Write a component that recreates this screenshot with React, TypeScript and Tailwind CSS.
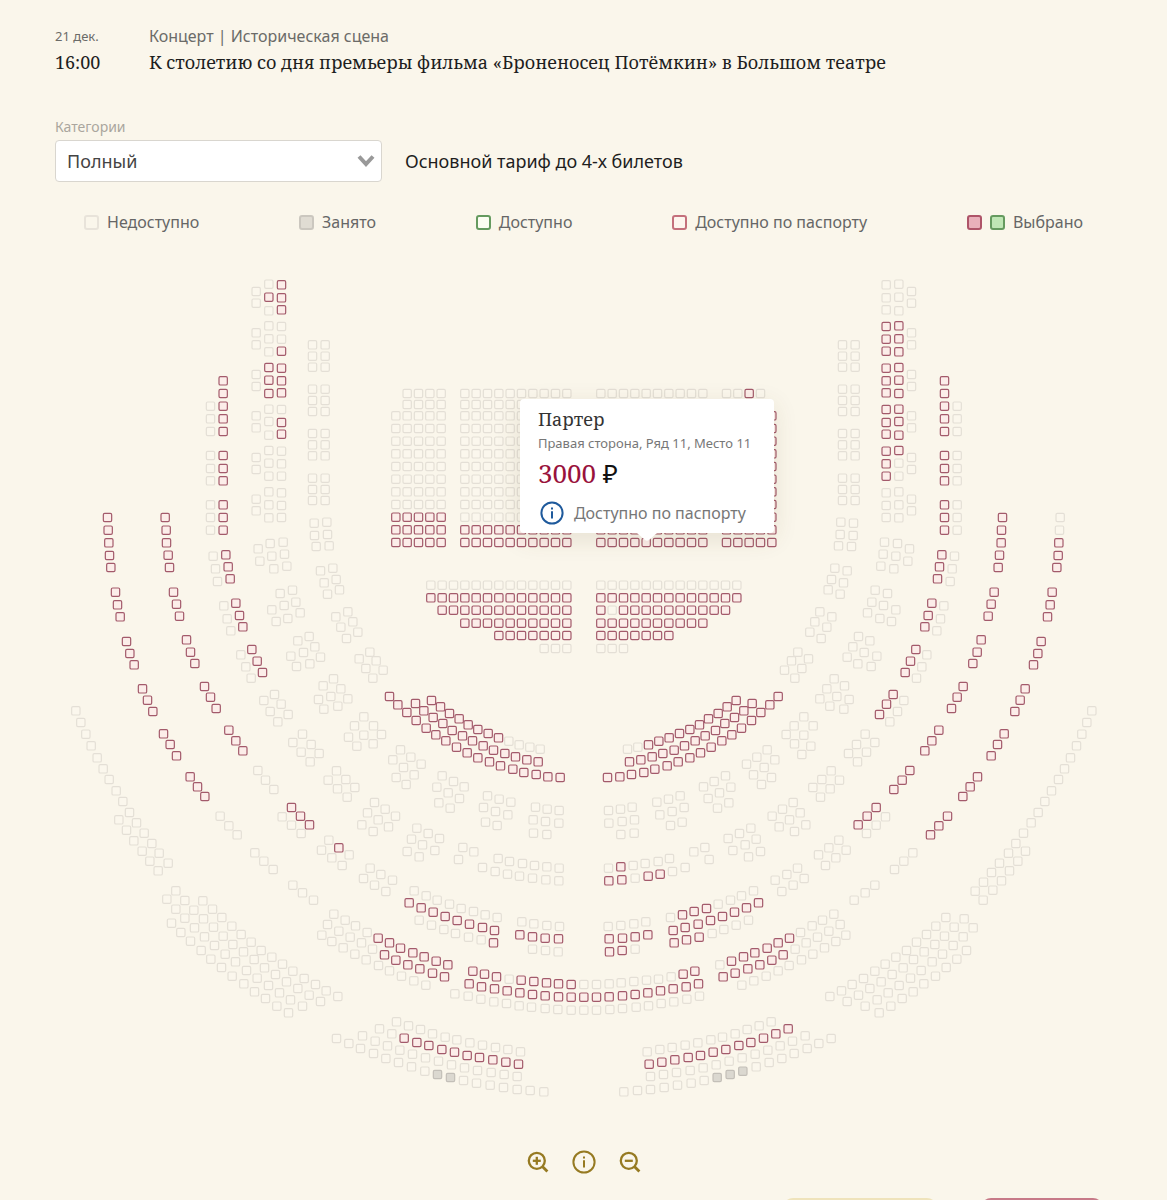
import React from "react";

type Sector = {
  x: number;
  y: number;
  /** [seat centres "x,y;x,y", left half states, right half states] */
  rows: [string, string, string][];
};

// One map unit is a third of a pixel. The hall is symmetric about AXIS / 2.
// r = by passport, g = taken, - = unavailable, space = no seat.
// A single-character state applies to the whole row.
const AXIS = 3502;

const SECTORS: Sector[] = [
  {
    x: 570,
    y: 810,
    rows: [
      ["274,44;274,83;274,119;236,42;236,81;236,122;198,64;198,99", "rrr-r---", "-"],
      ["274,169;274,207;274,243;236,167;236,206;236,245;198,188;198,224", "--r-----", "rrrrrr--"],
      ["274,294;274,332;274,368;236,292;236,330;236,370;198,313;198,349", "rrrrrr--", "rrrrrr--"],
      ["274,418;274,457;274,492;236,417;236,454;236,495;198,437;198,473", "-rr-----", "rrrrrr--"],
      ["274,543;274,581;274,618;236,541;236,579;236,618;198,562;198,598", "-", "rrrr----"],
      ["274,668;274,706;274,742;236,665;236,704;236,743;198,687;198,722", "-", "-"],
      ["279,816;283,852;290,888;240,820;245,858;251,896;204,836;209,873", "-", "-"],
      ["307,960;317,996;330,1028;270,970;282,1006;293,1045;245,1019;258,1054", "-", "-"],
      ["357,1099;374,1130;391,1161;323,1112;340,1147;359,1181;302,1158;319,1189", "-", "-"],
      ["367,224;367,258;367,291;405,224;405,258;405,291", "-", "-"],
      ["367,357;367,391;367,424;405,357;405,391;405,424", "-", "-"],
      ["367,490;367,524;367,557;405,490;405,524;405,557", "-", "-"],
      ["367,624;367,658;367,691;405,624;405,658;405,691", "-", "-"],
      ["372,759;373,796;378,829;410,756;412,793;417,827", "-", "-"],
      ["391,902;402,938;412,972;428,894;438,928;448,959", "-", "-"],
      ["437,1040;452,1071;469,1105;473,1025;488,1055;503,1086", "-", "-"],
      ["507,1166;527,1195;548,1224;539,1146;558,1172;579,1200", "-", "-"],
      ["99,332;99,370;99,408;99,446;99,484", "r", "r"],
      ["99,556;99,595;99,632;99,704;99,742;99,780", "r", "r"],
      ["61,408;61,446;61,484;61,556;61,595;61,632;61,704;61,742;61,780", "-", "-"],
      ["107,854;114,890;120,926;137,999;148,1036;158,1070;185,1138;201,1173;217,1207", "r", "r"],
      ["69,858;76,896;82,934;101,1007;111,1046;122,1082;152,1154;167,1190;183,1224", "-", "-"],
    ],
  },
  {
    x: 180,
    y: 1470,
    rows: [
      ["643,613;663,642;684,673;611,631;630,664;653,695", "-", "rrr---"],
      ["727,732;753,763;777,790;698,757;723,786;750,815", "-", "-"],
      ["829,842;857,868;884,892;804,870;832,896;861,921", "-", "-"],
      ["943,937;975,957;1006,978;922,968;954,989;985,1010;905,1004;939,1024", "-", "-"],
      ["820,566;842,596;863,626;789,587;812,619;833,648;775,628;791,657", "-", "-"],
      ["911,680;940,707;964,733;883,707;911,735;939,761;865,741;890,768;917,793", "-------- ", "------ --"],
      ["694,952;721,978;748,1004;666,980;694,1005;723,1030", "rrr---", "rrr---"],
      ["806,1050;836,1073;867,1094;784,1080;815,1103;846,1126", "-r----", "-"],
      ["142,82;144,120;146,158;148,196;152,232", "r", "--rrr"],
      ["166,306;172,344;180,380;199,454;209,490;222,524;247,596;262,630;278,664", "r", "r"],
      ["310,731;330,763;349,797;390,860;412,890;434,919", "r", "r"],
      ["480,978;506,1007;531,1034", "-", "r"],
      ["584,1088;611,1113;639,1138;698,1185;727,1208;760,1230", "-", "-"],
      ["315,82;318,120;319,158;324,195;328,232;340,306;349,342;358,378", "r", "r"],
      ["379,449;391,486;404,520;433,589;451,621;468,655;506,720;527,752;548,782", "r", "r"],
      ["593,841;616,870;641,898", "-", "r"],
      ["47,662;62,697;77,732;93,767;111,803;129,836;147,868;168,902;188,934", "-", "-"],
      ["208,967;229,998;252,1029;275,1060;297,1089;324,1119", "-", "-"],
      ["176,989;199,1020;221,1052;246,1083;269,1113;294,1142", "-", "   ---"],
      ["348,1147;372,1176;397,1203;318,1172;344,1200;373,1230", " ", "-"],
    ],
  },
  {
    x: 1110,
    y: 2010,
    rows: [
      ["0,594;32,613;67,630;-20,625;13,645;47,664", "-", "-"],
      ["91,239;122,261;153,282;68,269;100,292;132,314;78,322;108,343", "-", "-"],
      ["216,317;250,334;282,350;200,351;234,368;268,385;206,398;240,414", "-", "-"],
      ["352,377;387,387;422,396;340,412;376,424;413,434;346,456;381,466", "-", "-"],
      ["496,411;531,417;567,421;489,449;526,454;566,459;490,489;530,493", "-", "-"],
      ["140,474;174,490;208,505;124,507;157,524;194,541;111,544;147,560", "-", "-"],
      ["278,532;311,545;265,568", "-", "-"],
      ["384,565;418,574;457,580;493,586;530,590;567,594", "-", "----r-"],
      ["337,592;375,604;412,612;448,618;487,624;527,629;566,632", "-", "--rr-rr"],
      ["184,91;211,110;238,130;267,146;294,164;323,178;354,190;385,203;416,213;447,224;479,231;510,237", "rrrrrrrr----", "rrrrrrrrrr--"],
      ["136,100;161,122;189,142;218,160;246,181;277,197;307,212;339,227;370,240;404,250;436,260;470,269;504,275", "r", "r"],
      ["58,79;83,104;110,127;138,151;168,174;197,194;227,212;259,231;291,248;323,263;358,275;391,287;428,297;461,307;498,313;533,320;570,322", "r", "r"],
      ["132,662;168,677;201,690;238,702;273,715;310,724;345,734;381,742", "-", "----rrr-"],
      ["117,698;153,713;189,726;225,739;261,751;298,762;337,772;373,781", "r", "r"],
      ["147,750;184,765;221,778;256,790;295,801;333,809;370,818", "------r", "----rrr"],
      ["455,755;491,761;530,766;568,769", "-", "-"],
      ["449,794;487,800;525,804;565,806", "r", "r"],
      ["487,837;526,841;564,845", "-", "-rr"],
    ],
  },
  {
    x: 960,
    y: 2640,
    rows: [
      ["41,102;75,120;106,137;141,157;174,174;208,188;241,204;278,218;312,230;348,243;383,254", "----rrrrrrr", "----rrrrrr-"],
      ["22,133;56,153;90,171;124,188;157,207;193,224;227,240;263,254;299,266;337,279;373,290", "-----rrrrrr", "-----rrrrrr"],
      ["5,165;35,184;69,203;104,222;138,239;175,256;208,272;244,288;281,302;317,315", "-", "-"],
      ["458,273;493,282;529,290;567,297;603,300;641,304;679,308;715,311;753,313;791,313", "rrr-rrrrr-", "rr------- "],
      ["447,311;484,320;523,326;561,332;599,338;637,343;675,347;715,350;753,351;791,351", "r", "rrrrrrrrr "],
      ["404,341;444,348;482,357;521,365;559,370;597,377;634,381;675,385;713,388;753,390;791,390", "-", " --------- "],
      ["229,425;265,437;301,448;337,461;375,471;410,479;449,488;487,495;526,502;563,508;601,515", "-", "-"],
      ["178,446;215,461;252,474;290,487;326,496;365,508;403,516;441,526;478,532;518,539;557,546;595,552", "--rrrrrrrrrr", "r"],
      ["127,467;165,483;202,497;239,510;277,522;316,533;355,543;394,554;433,563;472,571;513,577;552,583;591,589", "-", "-"],
      ["49,475;86,490;121,505;160,520;197,535;235,547;274,560;314,573;352,583;391,592;430,601;469,609;510,615;550,622;591,628;630,631;671,635", "--------gg-------", "-------ggg-------"],
    ],
  },
  {
    x: 450,
    y: 2580,
    rows: [
      ["77,92;104,121;131,150;160,176;190,201;219,228;248,253;280,275;312,298;343,323;376,343;409,365;443,385;477,405;511,424", "-", "   ------------"],
      ["158,122;187,147;215,172;245,198;273,223;303,246;333,271;365,291;397,312;428,333;462,355;496,373;528,392;563,409", "-", "  ------------"],
      ["50,117;77,147;104,174;133,203;163,230;193,256;225,282;256,305;289,331;321,354;355,376;388,398;421,419;457,438", "-", "   -----------"],
      ["64,189;92,217;121,243;153,271;182,297;214,322;246,348;281,371;313,395;346,415;380,438;415,458", "-", "   ---------"],
    ],
  },
];

type Seat = { x: number; y: number; state: string };

const seats: Seat[] = [];

SECTORS.forEach((sector) =>
  sector.rows.forEach(([points, left, right]) =>
    points.split(";").forEach((point, i) => {
      const [px, py] = point.split(",").map(Number);
      const x = sector.x + px;
      const y = sector.y + py;
      seats.push({ x, y, state: left.length > 1 ? left[i] : left });
      seats.push({ x: AXIS - x, y, state: right.length > 1 ? right[i] : right });
    })
  )
);

// Stalls: [y, first column of 13, left states, right states], columns run to the aisle.
const STALLS_STEP = 34;
const addStalls = (y: number, x: number, count: number, left: string, right: string) => {
  for (let i = 0; i < count; i++) {
    const cx = x + i * STALLS_STEP;
    seats.push({ x: cx, y, state: left.length > 1 ? left[i] : left });
    seats.push({ x: AXIS - cx, y, state: right.length > 1 ? right[i] : right });
  }
};

for (let row = 0; row < 13; row++) {
  const y = row < 2 ? 1180 + row * 33 : 1247 + (row - 2) * 38;
  const side = row > 9 ? "r" : "-";
  if (row === 0) addStalls(y, 1221, 4, "-", "-r--");
  else if (row === 1) addStalls(y, 1221, 4, "-", "-");
  else addStalls(y, 1187, 5, side, "r");
  addStalls(y, 1394, 10, row > 10 ? "r" : "-", row > 10 ? "r" : "-");
}
addStalls(1755, 1292, 13, "-", "-");
addStalls(1793, 1292, 13, "r", "r");
addStalls(1830, 1326, 12, "r", "rrrrrrrrrr-r");
addStalls(1869, 1394, 10, "r", "r");
addStalls(1906, 1496, 7, "r", "r");
addStalls(1945, 1632, 3, "-", "-");

const SEAT_CLASS: Record<string, string> = {
  r: "fill-[#fcede9] stroke-[#a35a6b]",
  g: "fill-[#dbd8d0] stroke-[#c3bfb8]",
  "-": "fill-[#fbf7ed] stroke-[#e4dfd6]",
};

function SeatMap() {
  return (
    <svg viewBox="165 810 3171 2520" className="block h-auto w-full" role="img" aria-label="Схема зала">
      {seats
        .filter((s) => s.state !== " ")
        .map((s, i) => (
          <rect
            key={i}
            x={s.x - 12}
            y={s.y - 12}
            width={25}
            height={25}
            rx={4}
            strokeWidth={3.6}
            className={SEAT_CLASS[s.state]}
          />
        ))}
    </svg>
  );
}

function InfoIcon({ className }: { className: string }) {
  return (
    <svg viewBox="0 0 24 24" fill="none" stroke="currentColor" strokeWidth="2" className={className} aria-hidden="true">
      <circle cx="12" cy="12" r="10.6" />
      <path d="M12 10.2v7.2" />
      <path d="M12 6.4v2" />
    </svg>
  );
}

function ZoomIcon({ plus }: { plus?: boolean }) {
  return (
    <svg viewBox="0 0 22 22" fill="none" stroke="currentColor" strokeWidth="2.3" className="size-[22px]" aria-hidden="true">
      <circle cx="9.8" cy="9.8" r="8" />
      <path d="M15.4 15.4l5 5" strokeWidth="2.8" />
      <path d="M5.8 9.8h8" />
      {plus && <path d="M9.8 5.8v8" />}
    </svg>
  );
}

function Swatch({ className }: { className: string }) {
  return <span className={`size-[15px] rounded-[3px] border-2 ${className}`} />;
}

const LEGEND = [
  { label: "Недоступно", swatches: ["border-[#e8e3da]"] },
  { label: "Занято", swatches: ["border-[#cbc7bf] bg-[#e0dcd3]"] },
  { label: "Доступно", swatches: ["border-[#659a5f] bg-[#fbfdf2]"] },
  { label: "Доступно по паспорту", swatches: ["border-[#c4707c] bg-[#fdf5ee]"] },
  { label: "Выбрано", swatches: ["border-[#ae5468] bg-[#e9b0ba]", "border-[#659a5f] bg-[#bfe6b5]"] },
];

function SeatTooltip() {
  return (
    <div
      role="tooltip"
      className="absolute top-[15.4%] left-[56%] h-[134px] w-[254px] -translate-x-1/2 rounded bg-white px-[18px] pt-[7px] shadow-[0_6px_24px_rgba(90,70,30,0.12)]"
    >
      <p className="font-['Noto_Serif','DejaVu_Serif',serif] text-[18px] leading-[26px] text-[#333]">Партер</p>
      <p className="text-[13px] leading-[22px] whitespace-nowrap text-[#777]">Правая сторона, Ряд 11, Место 11</p>
      <p className="text-[26px] leading-[38px] text-[#111]">
        <span className="font-['Noto_Serif','Liberation_Serif',serif] text-[#99123c]">3000</span>{" "}
        <span>₽</span>
      </p>
      <p className="mt-[9px] flex items-center gap-[10px] pl-[2px] text-[16px] leading-[24px] whitespace-nowrap text-[#777]">
        <InfoIcon className="size-[24px] shrink-0 text-[#1f5a9c]" />
        Доступно по паспорту
      </p>
      <svg viewBox="0 0 20 8" className="absolute top-full left-1/2 h-[8px] w-[20px] -translate-x-1/2" aria-hidden="true">
        <path d="M0 0h20l-8 7q-2 1.500-4 0z" fill="#fff" />
      </svg>
    </div>
  );
}

export default function App() {
  return (
    <main className="h-screen overflow-hidden bg-[#faf6eb] px-[55px] pt-[23px] font-['Noto_Sans',sans-serif] text-[#1e1e1e]">
      <header className="grid grid-cols-[94px_1fr] leading-[26px]">
        <time className="text-[13px] text-[#6b6b68]">21 дек.</time>
        <p className="text-[16px] text-[#6b6b68]">Концерт | Историческая сцена</p>
        <time className="font-['Noto_Serif','Liberation_Serif',serif] text-[18px]">16:00</time>
        <h1 className="font-['Noto_Serif','Liberation_Serif',serif] text-[18px] whitespace-nowrap">
          К столетию со дня премьеры фильма «Броненосец Потёмкин» в Большом театре
        </h1>
      </header>

      <section className="mt-[42px]">
        <label htmlFor="category" className="block text-[14px] leading-[20px] text-[#aaa69e]">
          Категории
        </label>
        <div className="mt-[3px] flex items-center gap-[23px]">
          <div className="relative w-[327px]">
            <select
              id="category"
              className="block h-[42px] w-full appearance-none rounded-[4px] border border-[#d9d6cf] bg-white pr-10 pl-[11px] text-[18px] text-[#444]"
            >
              <option>Полный</option>
            </select>
            <svg
              viewBox="0 0 18 12"
              fill="none"
              stroke="#999"
              strokeWidth="4"
              className="pointer-events-none absolute top-[15px] right-[7px] h-[12px] w-[18px]"
              aria-hidden="true"
            >
              <path d="M2 1.500l7 7.500 7-7.500" />
            </svg>
          </div>
          <p className="text-[18px]">Основной тариф до 4-х билетов</p>
        </div>
      </section>

      <ul className="mt-[28px] flex items-center justify-between px-[29px] text-[16px] leading-[24px] whitespace-nowrap text-[#666]">
        {LEGEND.map((item) => (
          <li key={item.label} className="flex items-center gap-[8px]">
            {item.swatches.map((s) => (
              <Swatch key={s} className={s} />
            ))}
            {item.label}
          </li>
        ))}
      </ul>

      <section className="relative mt-[36px]">
        <SeatMap />
        <SeatTooltip />
      </section>

      <div className="mt-[40px] flex items-center justify-center gap-[23px] text-[#967a22]">
        <button type="button" aria-label="Увеличить">
          <ZoomIcon plus />
        </button>
        <button type="button" aria-label="Информация">
          <InfoIcon className="size-[24px]" />
        </button>
        <button type="button" aria-label="Уменьшить">
          <ZoomIcon />
        </button>
      </div>

      <footer className="mt-[24px] flex justify-end gap-[44px] pr-[9px]">
        <button type="button" aria-label="Назад" className="h-[44px] w-[154px] rounded-[10px] border-2 border-[#efe3bb] bg-[#f0e5c0]" />
        <button type="button" aria-label="Продолжить" className="h-[44px] w-[122px] rounded-[10px] border-2 border-[#c77a88] bg-[#99123c]" />
      </footer>
    </main>
  );
}
